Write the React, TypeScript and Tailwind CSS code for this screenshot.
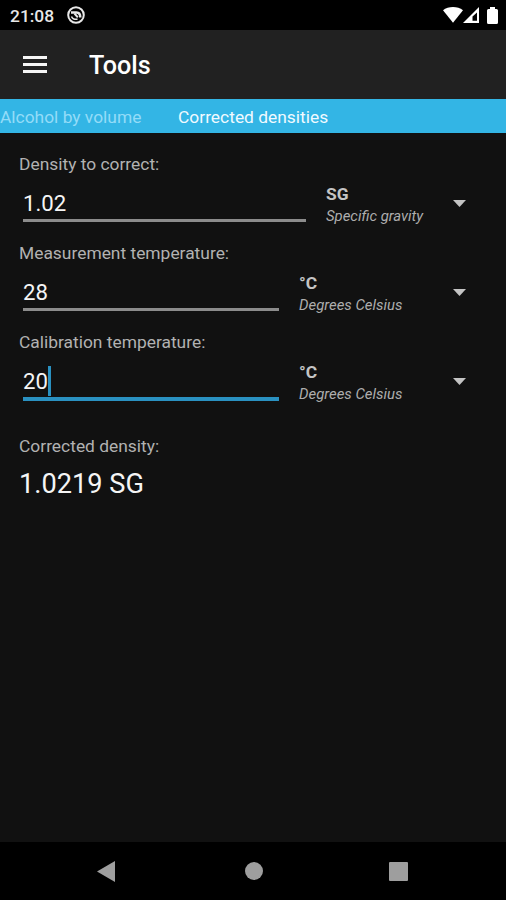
import React, { useState } from "react";
import clsx from "clsx";

interface FieldProps {
  label: string;
  value: string;
  unit: string;
  unitName: string;
  wide?: boolean;
  focused?: boolean;
  onFocus: () => void;
}

const Field: React.FC<FieldProps> = ({
  label,
  value,
  unit,
  unitName,
  wide,
  focused,
  onFocus,
}) => (
  <div className="h-[89px]">
    <div className="h-5 text-[17.4px] leading-5 text-[#b2b2b2]">{label}</div>
    <div className="flex h-12 pl-1">
      <div
        className={clsx(
          "flex items-center pt-[12.5px]",
          wide ? "w-[283px]" : "w-[256px]",
          focused
            ? "h-[49px] border-b-4 border-[#2a91c1]"
            : "h-12 border-b-[3px] border-[#8c8c8c]",
        )}
        onClick={onFocus}
      >
        <span className="text-[22.2px] leading-6 text-[#f5f5f5]">{value}</span>
        {focused && <span className="h-[30px] w-[3px] bg-[#2a91c1]" />}
      </div>
      <button className="ml-5 flex flex-1 items-center text-left">
        <span className="flex-1 pt-[13px]">
          <span className="block text-[17.4px] leading-[22px] font-bold text-[#c4c4c4]">
            {unit}
          </span>
          <span className="block text-[14.9px] leading-[22px] text-[#adadad] italic">
            {unitName}
          </span>
        </span>
        <svg width="13" height="7" viewBox="0 0 13 7" className="mt-[10px] mr-[21px]">
          <path d="M0 0h13L6.5 7z" fill="#c4c4c4" />
        </svg>
      </button>
    </div>
  </div>
);

const StatusBar = () => (
  <div className="flex h-[30px] items-center bg-black pr-2 pl-[10px] text-white">
    <span className="pt-px text-[17.4px] leading-5 font-medium text-[#e8e8e8]">21:08</span>
    <svg width="18" height="18" viewBox="0 0 18 18" className="ml-[13px]" fill="none" stroke="#e8e8e8">
      <circle cx="9" cy="9" r="7.8" strokeWidth="2" />
      <path d="M4 6.500h5.500c2.500 0 3.800 2 3.800 5" strokeWidth="2.500" />
      <path d="M4.500 10.500c.8 2.300 3.500 3.500 6 2.500" strokeWidth="1.500" />
      <path d="M7.500 7.500l3.300 3.800" strokeWidth="2" />
    </svg>
    <div className="ml-auto flex items-center">
      <svg width="20" height="16" viewBox="0 0 20 16" fill="white">
        <path d="M0 3.3C5.4-1 14.6-1 20 3.3L10 15.8z" />
      </svg>
      <svg width="16" height="16" viewBox="0 0 16 16">
        <path d="M0 16 16 0v16z" fill="white" />
        <path d="M9.500 9.500l4.500-4v8.300H9.500z" fill="black" />
      </svg>
      <svg width="11" height="17" viewBox="0 0 11 17" className="ml-2" fill="white">
        <path d="M3 0h5v2h1.500A1.500 1.500 0 0 1 11 3.500v12A1.500 1.500 0 0 1 9.500 17h-8A1.500 1.500 0 0 1 0 15.500v-12A1.500 1.500 0 0 1 1.500 2H3z" />
      </svg>
    </div>
  </div>
);

const NavigationBar = () => (
  <div className="flex h-[58px] items-center bg-black pl-[97px]">
    <svg width="18" height="21" viewBox="0 0 18 21">
      <path d="M18 0v21L0 10.500z" fill="#9e9e9e" />
    </svg>
    <span className="ml-[130px] size-[18px] rounded-full bg-[#9e9e9e]" />
    <span className="ml-[126px] size-[19px] rounded-[1px] bg-[#9e9e9e]" />
  </div>
);

const App: React.FC = () => {
  const [focused, setFocused] = useState("calibration");

  return (
    <div className="flex h-[900px] w-[506px] flex-col overflow-hidden bg-[#111111] font-['Roboto',sans-serif]">
      <StatusBar />
      <header className="flex h-[69px] items-center bg-[#212121] pl-[23px]">
        <button className="flex w-6 flex-col gap-1">
          <span className="h-[3px] bg-[#f5f5f5]" />
          <span className="h-[3px] bg-[#f5f5f5]" />
          <span className="h-[3px] bg-[#f5f5f5]" />
        </button>
        <h1 className="ml-[42px] pt-[3px] text-[25.2px] leading-7 font-medium text-white">Tools</h1>
      </header>
      <nav className="flex h-[34px] items-center bg-[#33b5e5] pt-[3px] text-[17.4px] whitespace-nowrap">
        <span className="w-[178px] text-[#93dcf8]">Alcohol by volume</span>
        <span className="text-[#f0faff]">Corrected densities</span>
      </nav>

      <main className="flex-1 px-[19px] pt-[21px]">
        <Field
          label="Density to correct:"
          value="1.02"
          unit="SG"
          unitName="Specific gravity"
          wide
          focused={focused === "density"}
          onFocus={() => setFocused("density")}
        />
        <Field
          label="Measurement temperature:"
          value="28"
          unit="°C"
          unitName="Degrees Celsius"
          focused={focused === "measurement"}
          onFocus={() => setFocused("measurement")}
        />
        <Field
          label="Calibration temperature:"
          value="20"
          unit="°C"
          unitName="Degrees Celsius"
          focused={focused === "calibration"}
          onFocus={() => setFocused("calibration")}
        />
        <div className="mt-[15px] text-[17.4px] leading-5 text-[#b2b2b2]">Corrected density:</div>
        <div className="mt-3 text-[27.2px] leading-8 text-[#f5f5f5]">1.0219 SG</div>
      </main>

      <NavigationBar />
    </div>
  );
};

export default App;
